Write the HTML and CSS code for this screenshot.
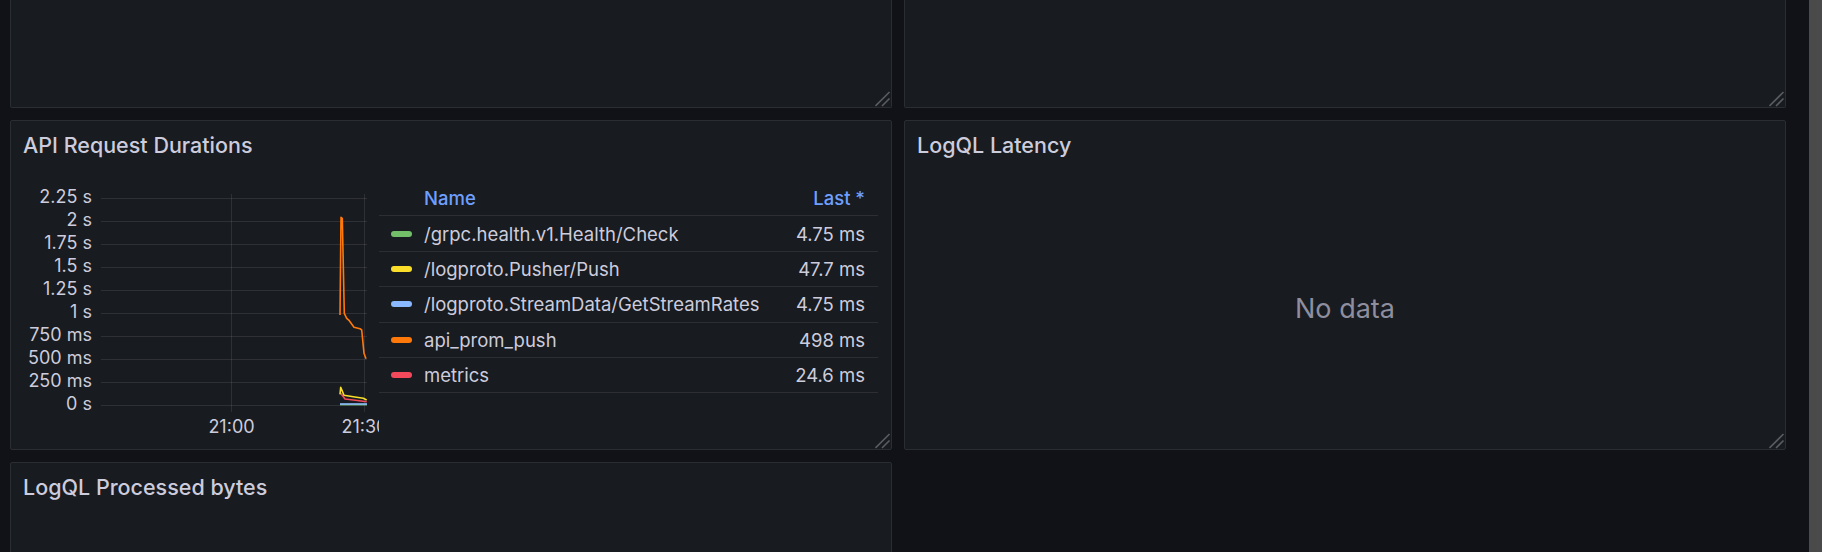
FILE: index.html
```html
<!DOCTYPE html>
<html lang="en">
<head>
<meta charset="utf-8">
<title>Dashboard</title>
<link rel="stylesheet" href="styles.css">
</head>
<body>
<div class="page">
  <main class="grid">
    <section class="panel panel-top">
      <svg class="resize" width="16" height="16" viewBox="0 0 16 16"><path d="M0.5 15 L14.5 1 M7 15 L14.5 7.5"/></svg>
    </section>
    <section class="panel panel-top">
      <svg class="resize" width="16" height="16" viewBox="0 0 16 16"><path d="M0.5 15 L14.5 1 M7 15 L14.5 7.5"/></svg>
    </section>

    <section class="panel">
      <header class="panel-header"><h2 class="panel-title">API Request Durations</h2></header>
      <div class="panel-body chart-body">
        <svg class="chart" width="368" height="291" viewBox="0 0 368 291">
          <g class="grid-lines">
            <line x1="90" x2="356" y1="40.5" y2="40.5"/>
            <line x1="90" x2="356" y1="63.5" y2="63.5"/>
            <line x1="90" x2="356" y1="86.5" y2="86.5"/>
            <line x1="90" x2="356" y1="109.5" y2="109.5"/>
            <line x1="90" x2="356" y1="132.5" y2="132.5"/>
            <line x1="90" x2="356" y1="155.5" y2="155.5"/>
            <line x1="90" x2="356" y1="178.5" y2="178.5"/>
            <line x1="90" x2="356" y1="201.5" y2="201.5"/>
            <line x1="90" x2="356" y1="224.5" y2="224.5"/>
            <line x1="90" x2="356" y1="247.5" y2="247.5"/>
            <line x1="220.5" x2="220.5" y1="36" y2="254"/>
            <line x1="353.5" x2="353.5" y1="36" y2="254"/>
          </g>
          <g class="y-labels">
            <text x="81" y="45">2.25 s</text>
            <text x="81" y="68">2 s</text>
            <text x="81" y="91">1.75 s</text>
            <text x="81" y="114">1.5 s</text>
            <text x="81" y="137">1.25 s</text>
            <text x="81" y="160">1 s</text>
            <text x="81" y="183">750 ms</text>
            <text x="81" y="206">500 ms</text>
            <text x="81" y="229">250 ms</text>
            <text x="81" y="252">0 s</text>
          </g>
          <g class="x-labels">
            <text x="220.5" y="275">21:00</text>
            <text x="353.5" y="275">21:30</text>
          </g>
          <g class="series">
            <polyline class="s-green" points="329,246.6 356,246.6"/>
            <polyline class="s-blue" points="329,246 356,246"/>
            <polyline class="s-red" points="329.7,235.3 334,241 342.3,242 355.7,243.7"/>
            <polyline class="s-yellow" points="329,236.3 329.7,229.3 333,237.3 342.3,238.7 352.3,240.3 355.7,242"/>
            <polyline class="s-orange" points="329,157 330,59.3 331.3,60.3 333.3,155.3 335.7,160.3 338.3,162.7 343,169.3 349,170.7 350.7,172 353,195.3 355,200.7"/>
          </g>
        </svg>
        <div class="legend">
          <div class="legend-row legend-head">
            <span class="legend-name">Name</span>
            <span class="legend-value">Last *</span>
          </div>
          <div class="legend-row">
            <span class="swatch sw-green"></span>
            <span class="legend-name">/grpc.health.v1.Health/Check</span>
            <span class="legend-value">4.75 ms</span>
          </div>
          <div class="legend-row">
            <span class="swatch sw-yellow"></span>
            <span class="legend-name">/logproto.Pusher/Push</span>
            <span class="legend-value">47.7 ms</span>
          </div>
          <div class="legend-row">
            <span class="swatch sw-blue"></span>
            <span class="legend-name">/logproto.StreamData/GetStreamRates</span>
            <span class="legend-value">4.75 ms</span>
          </div>
          <div class="legend-row">
            <span class="swatch sw-orange"></span>
            <span class="legend-name">api_prom_push</span>
            <span class="legend-value">498 ms</span>
          </div>
          <div class="legend-row">
            <span class="swatch sw-red"></span>
            <span class="legend-name">metrics</span>
            <span class="legend-value">24.6 ms</span>
          </div>
        </div>
      </div>
      <svg class="resize" width="16" height="16" viewBox="0 0 16 16"><path d="M0.5 15 L14.5 1 M7 15 L14.5 7.5"/></svg>
    </section>

    <section class="panel">
      <header class="panel-header"><h2 class="panel-title">LogQL Latency</h2></header>
      <div class="panel-body nodata-body">
        <span class="nodata">No data</span>
      </div>
      <svg class="resize" width="16" height="16" viewBox="0 0 16 16"><path d="M0.5 15 L14.5 1 M7 15 L14.5 7.5"/></svg>
    </section>

    <section class="panel">
      <header class="panel-header"><h2 class="panel-title">LogQL Processed bytes</h2></header>
    </section>
  </main>
  <div class="scrollbar"></div>
</div>
</body>
</html>
```

FILE: styles.css
```css
* { box-sizing: border-box; }
html, body {
  margin: 0;
  padding: 0;
  height: 100%;
  background: #111217;
  overflow: hidden;
  font-family: Inter, "Noto Sans", sans-serif;
  color: #ccccdc;
}
.page {
  display: flex;
  width: 1822px;
  height: 552px;
  overflow: hidden;
}
.grid {
  flex: 0 0 1809px;
  display: grid;
  grid-template-columns: 882px 882px;
  grid-template-rows: 108px 330px 330px;
  column-gap: 12px;
  row-gap: 12px;
  padding-left: 10px;
  align-content: start;
}
.scrollbar {
  flex: 0 0 13px;
  background: #4a4a4a;
}
.panel {
  position: relative;
  background: #181b1f;
  border: 1px solid #2a2d32;
  border-radius: 2px;
  display: flex;
  flex-direction: column;
  overflow: hidden;
}
.panel-top {
  border-top: none;
  border-radius: 0 0 2px 2px;
}
.panel-header {
  flex: 0 0 37px;
  padding: 12px 12px 0 12px;
}
.panel-title {
  margin: 0;
  font-size: 21.5px;
  font-weight: 500;
  line-height: 25px;
  color: #ccccdc;
  white-space: nowrap;
}
.panel-body {
  flex: 1;
  min-height: 0;
}
.chart-body {
  display: flex;
}
.chart {
  flex: 0 0 368px;
  display: block;
}
.grid-lines line {
  stroke: rgba(204, 204, 220, 0.12);
  stroke-width: 1;
}
.y-labels text {
  font-family: Inter, "Noto Sans", sans-serif;
  font-size: 18px;
  fill: #ccccdc;
  text-anchor: end;
}
.x-labels text {
  font-family: Inter, "Noto Sans", sans-serif;
  font-size: 18px;
  fill: #ccccdc;
  text-anchor: middle;
}
.series polyline {
  fill: none;
  stroke-width: 1.6;
  stroke-linejoin: round;
}
.s-green { stroke: #73bf69; }
.s-blue { stroke: #8ab8ff; }
.s-red { stroke: #f2495c; }
.s-yellow { stroke: #fade2a; }
.s-orange { stroke: #ff780a; }

.legend {
  flex: 1;
  padding: 23px 13px 0 0;
  font-size: 18.5px;
}
.legend-row {
  display: flex;
  align-items: center;
  height: 35.4px;
  padding: 0 13px 0 12px;
  border-bottom: 1px solid #2c2e34;
  white-space: nowrap;
}
.legend-head {
  padding-left: 45px;
  color: #6e9fff;
  font-weight: 500;
}
.swatch {
  flex: 0 0 21px;
  height: 6px;
  border-radius: 3px;
  margin-right: 12px;
}
.sw-green { background: #73bf69; }
.sw-yellow { background: #fade2a; }
.sw-blue { background: #8ab8ff; }
.sw-orange { background: #ff780a; }
.sw-red { background: #f2495c; }
.legend-name {
  flex: 1;
}
.legend-value {
  text-align: right;
}
.nodata-body {
  display: flex;
  align-items: center;
  justify-content: center;
  padding-top: 10px;
}
.nodata {
  font-size: 27px;
  color: #8e8e9e;
}
.resize {
  position: absolute;
  right: 0;
  bottom: 0;
}
.resize path {
  fill: none;
  stroke: #5a5c62;
  stroke-width: 1.6;
}
```
